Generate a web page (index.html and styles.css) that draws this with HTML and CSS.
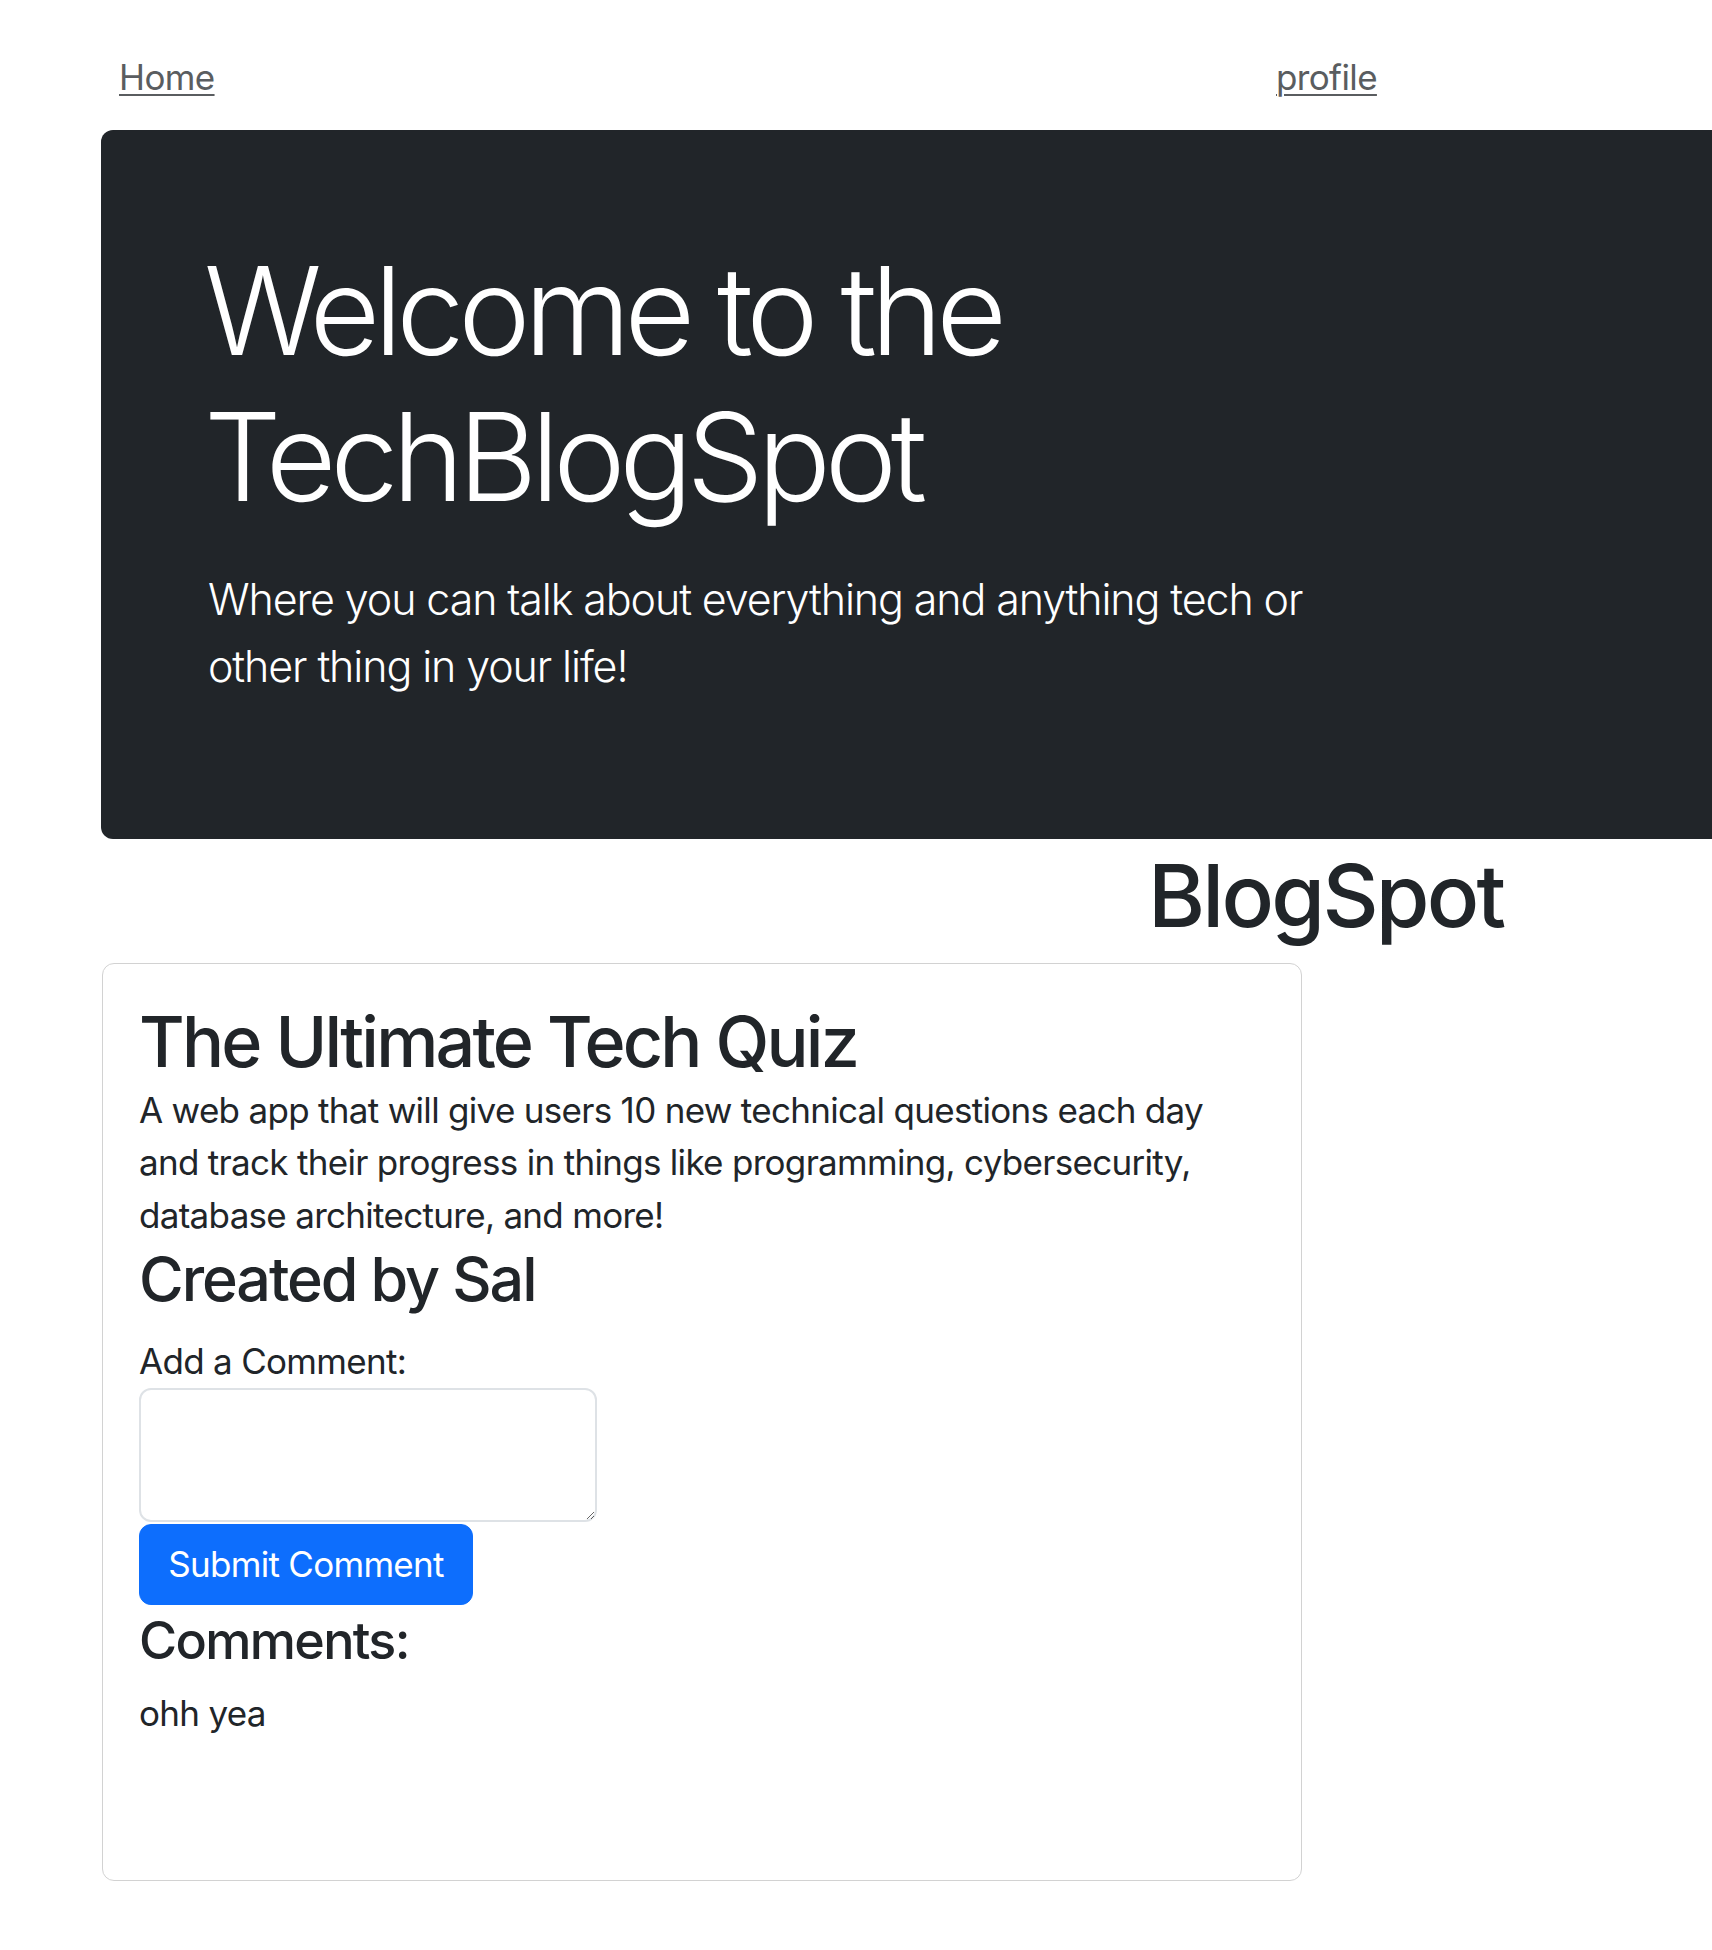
FILE: index.html
```html
<!DOCTYPE html>
<html lang="en">
<head>
<meta charset="utf-8">
<title>TechBlogSpot</title>
<link rel="stylesheet" href="styles.css">
</head>
<body>
<nav class="topnav">
  <a class="nav-link" href="#">Home</a>
  <a class="nav-link" href="#">profile</a>
</nav>
<section class="hero">
  <div class="hero-inner">
    <h1 class="hero-title">Welcome to the TechBlogSpot</h1>
    <p class="hero-lead">Where you can talk about everything and anything tech or other thing in your life!</p>
  </div>
</section>
<h1 class="page-title">BlogSpot</h1>
<article class="card">
  <h2 class="card-title">The Ultimate Tech Quiz</h2>
  <p class="card-text">A web app that will give users 10 new technical questions each day and track their progress in things like programming, cybersecurity, database architecture, and more!</p>
  <h3 class="card-author">Created by Sal</h3>
  <form class="comment-form">
    <label class="comment-label" for="comment">Add a Comment:</label>
    <textarea class="comment-input" id="comment"></textarea>
    <button class="btn-primary" type="button">Submit Comment</button>
  </form>
  <h4 class="comments-title">Comments:</h4>
  <p class="comment">ohh yea</p>
</article>
</body>
</html>
```
FILE: styles.css
```css
* { box-sizing: border-box; }
html, body { margin: 0; padding: 0; }
body {
  font-family: "Inter", "Helvetica Neue", "Liberation Sans", Arial, sans-serif;
  font-size: 35px;
  line-height: 1.5;
  letter-spacing: -0.02em;
  color: #212529;
  background: #fff;
}
.topnav {
  display: grid;
  grid-template-columns: 1157px auto;
  padding: 51px 0 0 119px;
  margin-bottom: 26px;
}
.nav-link {
  color: #5a5d60;
  text-decoration: underline;
  text-underline-offset: 4px;
  text-decoration-thickness: 2px;
  letter-spacing: -0.018em;
  justify-self: start;
}
.hero {
  margin-left: 101px;
  background: #212529;
  color: #fff;
  border-radius: 12px 0 0 12px;
  padding: 108px 107px 139px;
}
.hero-inner { max-width: 1150px; }
.hero-title {
  font-size: 122px;
  font-weight: 300;
  line-height: 146px;
  letter-spacing: -0.051em;
  margin: 0 0 36px -4px;
}
.hero-lead {
  font-size: 43px;
  font-weight: 300;
  line-height: 67px;
  letter-spacing: -0.026em;
  margin: 0;
}
.page-title {
  font-size: 87px;
  font-weight: 500;
  line-height: 104px;
  letter-spacing: -0.032em;
  margin: 5px 0 15px;
  padding-left: 1148px;
}
.card {
  margin-left: 102px;
  width: 1200px;
  border: 1px solid #d2d2d2;
  border-radius: 12px;
  padding: 36px 36px 37px 36px;
}
.card-title {
  font-size: 70px;
  font-weight: 500;
  line-height: 84px;
  letter-spacing: -0.04em;
  margin: 0;
}
.card-text { margin: 0; }
.card-author {
  font-size: 61px;
  font-weight: 500;
  line-height: 73px;
  letter-spacing: -0.034em;
  margin: 2px 0 19px;
}
.comment-form {
  display: flex;
  flex-direction: column;
  align-items: flex-start;
}
.comment-label { display: block; margin-bottom: 0; }
.comment-input {
  width: 458px;
  height: 134px;
  border: 2px solid #dee2e6;
  border-radius: 12px;
  font: inherit;
  margin: 0 0 2px;
}
.btn-primary {
  font: inherit;
  letter-spacing: -0.02em;
  white-space: nowrap;
  color: #fff;
  background: #0d6efd;
  border: 1px solid #0d6efd;
  border-radius: 12px;
  padding: 0;
  height: 81px;
  width: 334px;
  cursor: pointer;
}
.comments-title {
  font-size: 52px;
  font-weight: 500;
  line-height: 63px;
  letter-spacing: -0.032em;
  margin: 4px 0 15px;
}
.comment { margin: 0 0 104px; }
```
